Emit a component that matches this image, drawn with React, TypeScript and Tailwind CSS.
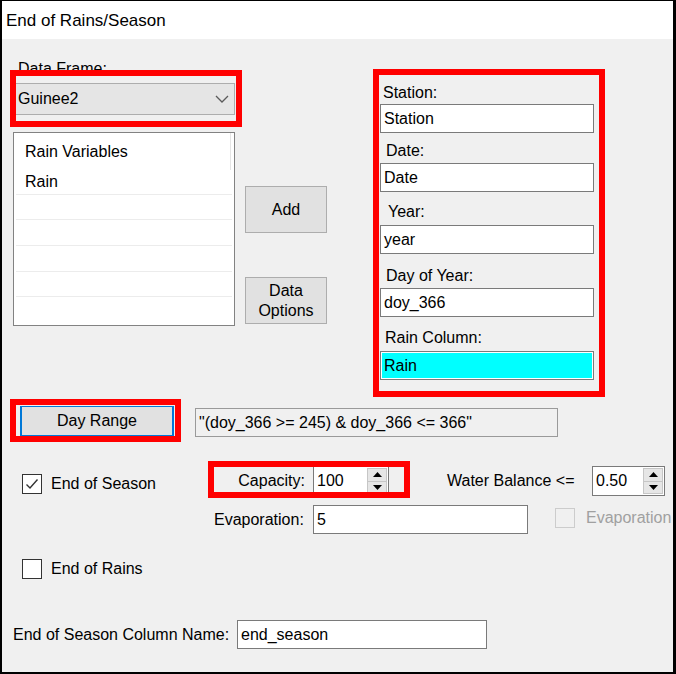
import React from 'react'

const RED = 'border-[#ff0000]'

function TextBox({ value, className = '', cyan = false }: { value: string; className?: string; cyan?: boolean }) {
  return (
    <div className={`shrink-0 border border-[#7a7a7a] bg-white p-[1px] ${className}`}>
      <div className={`h-full flex items-center pl-[2px] leading-[20px] ${cyan ? 'bg-[#00ffff]' : 'bg-white'}`}>{value}</div>
    </div>
  )
}

function Spinner() {
  return (
    <div className="flex flex-col w-[21px] h-full py-[1px] pr-[1px]">
      <div className="flex-1 flex items-center justify-center bg-[#e6e6e6] border border-[#c6c6c6]">
        <svg width="9" height="5" viewBox="0 0 9 5"><polygon points="0,5 9,5 4.5,0" fill="#000" /></svg>
      </div>
      <div className="flex-1 flex items-center justify-center bg-[#e6e6e6] border border-[#c6c6c6] border-t-0">
        <svg width="9" height="5" viewBox="0 0 9 5"><polygon points="0,0 9,0 4.5,5" fill="#000" /></svg>
      </div>
    </div>
  )
}

function SpinBox({ value, className = '' }: { value: string; className?: string }) {
  return (
    <div className={`shrink-0 flex border border-[#7a7a7a] bg-white ${className}`}>
      <div className="flex-1 flex items-center pl-[3px]">{value}</div>
      <Spinner />
    </div>
  )
}

function CheckBox({ checked = false, disabled = false }: { checked?: boolean; disabled?: boolean }) {
  return (
    <div
      className={`w-[20px] h-[20px] shrink-0 flex items-center justify-center border ${
        disabled ? 'border-[#cccccc]' : 'border-[#333333] bg-white'
      }`}
    >
      {checked && (
        <svg width="16" height="16" viewBox="0 0 16 16">
          <path d="M2.5 8.5 L6 12 L13.5 3.5" fill="none" stroke="#333" strokeWidth="1.4" />
        </svg>
      )}
    </div>
  )
}

const FIELDS = [
  { label: 'Station:', value: 'Station', pl: 'pl-[4px]', lm: 'mt-[8px]', bm: 'mt-[1px]' },
  { label: 'Date:', value: 'Date', pl: 'pl-[7px]', lm: 'mt-[8px]', bm: 'mt-[2px]' },
  { label: 'Year:', value: 'year', pl: 'pl-[9px]', lm: 'mt-[10px]', bm: 'mt-[3px]' },
  { label: 'Day of Year:', value: 'doy_366', pl: 'pl-[7px]', lm: 'mt-[12px]', bm: 'mt-[2px]' },
  { label: 'Rain Column:', value: 'Rain', pl: 'pl-[6px]', lm: 'mt-[11px]', bm: 'mt-[3px]' },
]

export default function App() {
  return (
    <div className="w-[676px] h-[674px] overflow-hidden border-black border-t border-l-2 border-r-[3px] border-b-2 flex flex-col bg-[#f0f0f0] font-['Liberation_Sans',Arial,sans-serif] text-[16px] text-black">
      {/* Title bar */}
      <div className="h-[38px] shrink-0 bg-white flex items-center pt-[2px] pl-[4px] text-[17px] leading-[20px]">
        End of Rains/Season
      </div>

      <div className="flex-1 flex flex-col whitespace-nowrap">
        {/* Top: data frame, list, buttons, column fields */}
        <div className="flex items-start h-[358px] shrink-0">
          <div className="shrink-0 ml-[11px] mt-[20px] w-[222px]">
            <div className="pl-[5px] h-[20px] leading-[20px]">Data Frame:</div>
            <div className="relative mt-[4px] ml-[2px] w-[220px] h-[32px] border border-[#adadad] bg-[#e5e5e5] flex items-center justify-between pl-[2px] pr-[5px]">
              <span>Guinee2</span>
              <svg width="14" height="8" viewBox="0 0 14 8">
                <path d="M1 1 L7 7 L13 1" fill="none" stroke="#5a5a5a" strokeWidth="1.3" />
              </svg>
              <div className={`absolute -left-[6px] -right-[8px] -top-[14px] -bottom-[13px] border-[6px] ${RED} pointer-events-none`} />
            </div>
            <div className="mt-[17px] w-[222px] h-[194px] border border-[#828282] bg-white flex flex-col px-[2px]">
              <div className="h-[37px] shrink-0 flex items-center pl-[9px] border-r border-[#e5e5e5] mr-[1px]">Rain Variables</div>
              <div className="h-[25px] shrink-0 flex items-center pl-[9px] border-b border-[#ececec]">Rain</div>
              <div className="h-[25px] shrink-0 border-b border-[#ececec]" />
              <div className="h-[26px] shrink-0 border-b border-[#ececec]" />
              <div className="h-[26px] shrink-0 border-b border-[#ececec]" />
              <div className="h-[25px] shrink-0 border-b border-[#ececec]" />
            </div>
          </div>

          <div className="shrink-0 ml-[10px] mt-[147px] w-[82px] flex flex-col">
            <button className="h-[47px] border border-[#adadad] bg-[#e1e1e1]">Add</button>
            <button className="mt-[44px] h-[47px] border border-[#adadad] bg-[#e1e1e1] leading-[20px]">
              Data
              <br />
              Options
            </button>
          </div>

          <div className={`shrink-0 ml-[46px] mt-[30px] w-[232px] h-[328px] border-[6px] ${RED} flex flex-col`}>
            {FIELDS.map((f) => (
              <div key={f.label} className="flex flex-col">
                <div className={`h-[20px] leading-[20px] ${f.pl} ${f.lm}`}>{f.label}</div>
                <TextBox value={f.value} cyan={f.label === 'Rain Column:'} className={`ml-[1px] w-[214px] h-[29px] ${f.bm}`} />
              </div>
            ))}
          </div>
        </div>

        {/* Day range */}
        <div className="flex items-start mt-[2px] shrink-0">
          <div className={`shrink-0 ml-[8px] w-[171px] h-[43px] border-[6px] ${RED} pl-[4px] pt-[1px]`}>
            <button className="w-[154px] h-[30px] border-x-2 border-y border-[#0078d7] bg-[#e1e1e1]">Day Range</button>
          </div>
          <div className="shrink-0 ml-[14px] mt-[9px] w-[363px] h-[29px] border border-[#9a9a9a] flex items-center pl-[3px]">
            "(doy_366 &gt;= 245) &amp; doy_366 &lt;= 366"
          </div>
        </div>

        {/* End of season / capacity / water balance */}
        <div className="flex items-start mt-[24px] h-[30px] shrink-0">
          <div className="shrink-0 ml-[20px] mt-[8px] w-[192px] flex items-center">
            <CheckBox checked />
            <span className="ml-[9px] leading-[20px]">End of Season</span>
          </div>
          <div className="shrink-0 relative flex h-[30px]">
            <div className="w-[91px] text-right leading-[30px]">Capacity:</div>
            <SpinBox value="100" className="ml-[8px] w-[76px] h-[30px]" />
            <div className={`absolute -left-[6px] -right-[21px] -top-[5px] -bottom-[2px] border-[6px] ${RED} pointer-events-none`} />
          </div>
          <div className="shrink-0 ml-[58px] w-[145px] leading-[30px]">Water Balance &lt;=</div>
          <SpinBox value="0.50" className="w-[73px] h-[30px]" />
        </div>

        {/* Evaporation */}
        <div className="flex items-start mt-[9px] shrink-0">
          <div className="shrink-0 ml-[212px] w-[88px] text-right leading-[29px]">Evaporation:</div>
          <TextBox value="5" className="ml-[11px] w-[215px] h-[29px]" />
          <div className="shrink-0 ml-[27px] mt-[3px] flex items-center">
            <CheckBox disabled />
            <span className="ml-[11px] leading-[20px] text-[#a0a0a0]">Evaporation as Variable</span>
          </div>
        </div>

        {/* End of rains */}
        <div className="flex items-center mt-[25px] ml-[20px] h-[20px] shrink-0">
          <CheckBox />
          <span className="ml-[9px] leading-[20px]">End of Rains</span>
        </div>

        {/* Column name */}
        <div className="flex items-center mt-[41px] shrink-0">
          <div className="shrink-0 ml-[11px] w-[224px] leading-[29px]">End of Season Column Name:</div>
          <TextBox value="end_season" className="w-[250px] h-[29px]" />
        </div>
      </div>
    </div>
  )
}
